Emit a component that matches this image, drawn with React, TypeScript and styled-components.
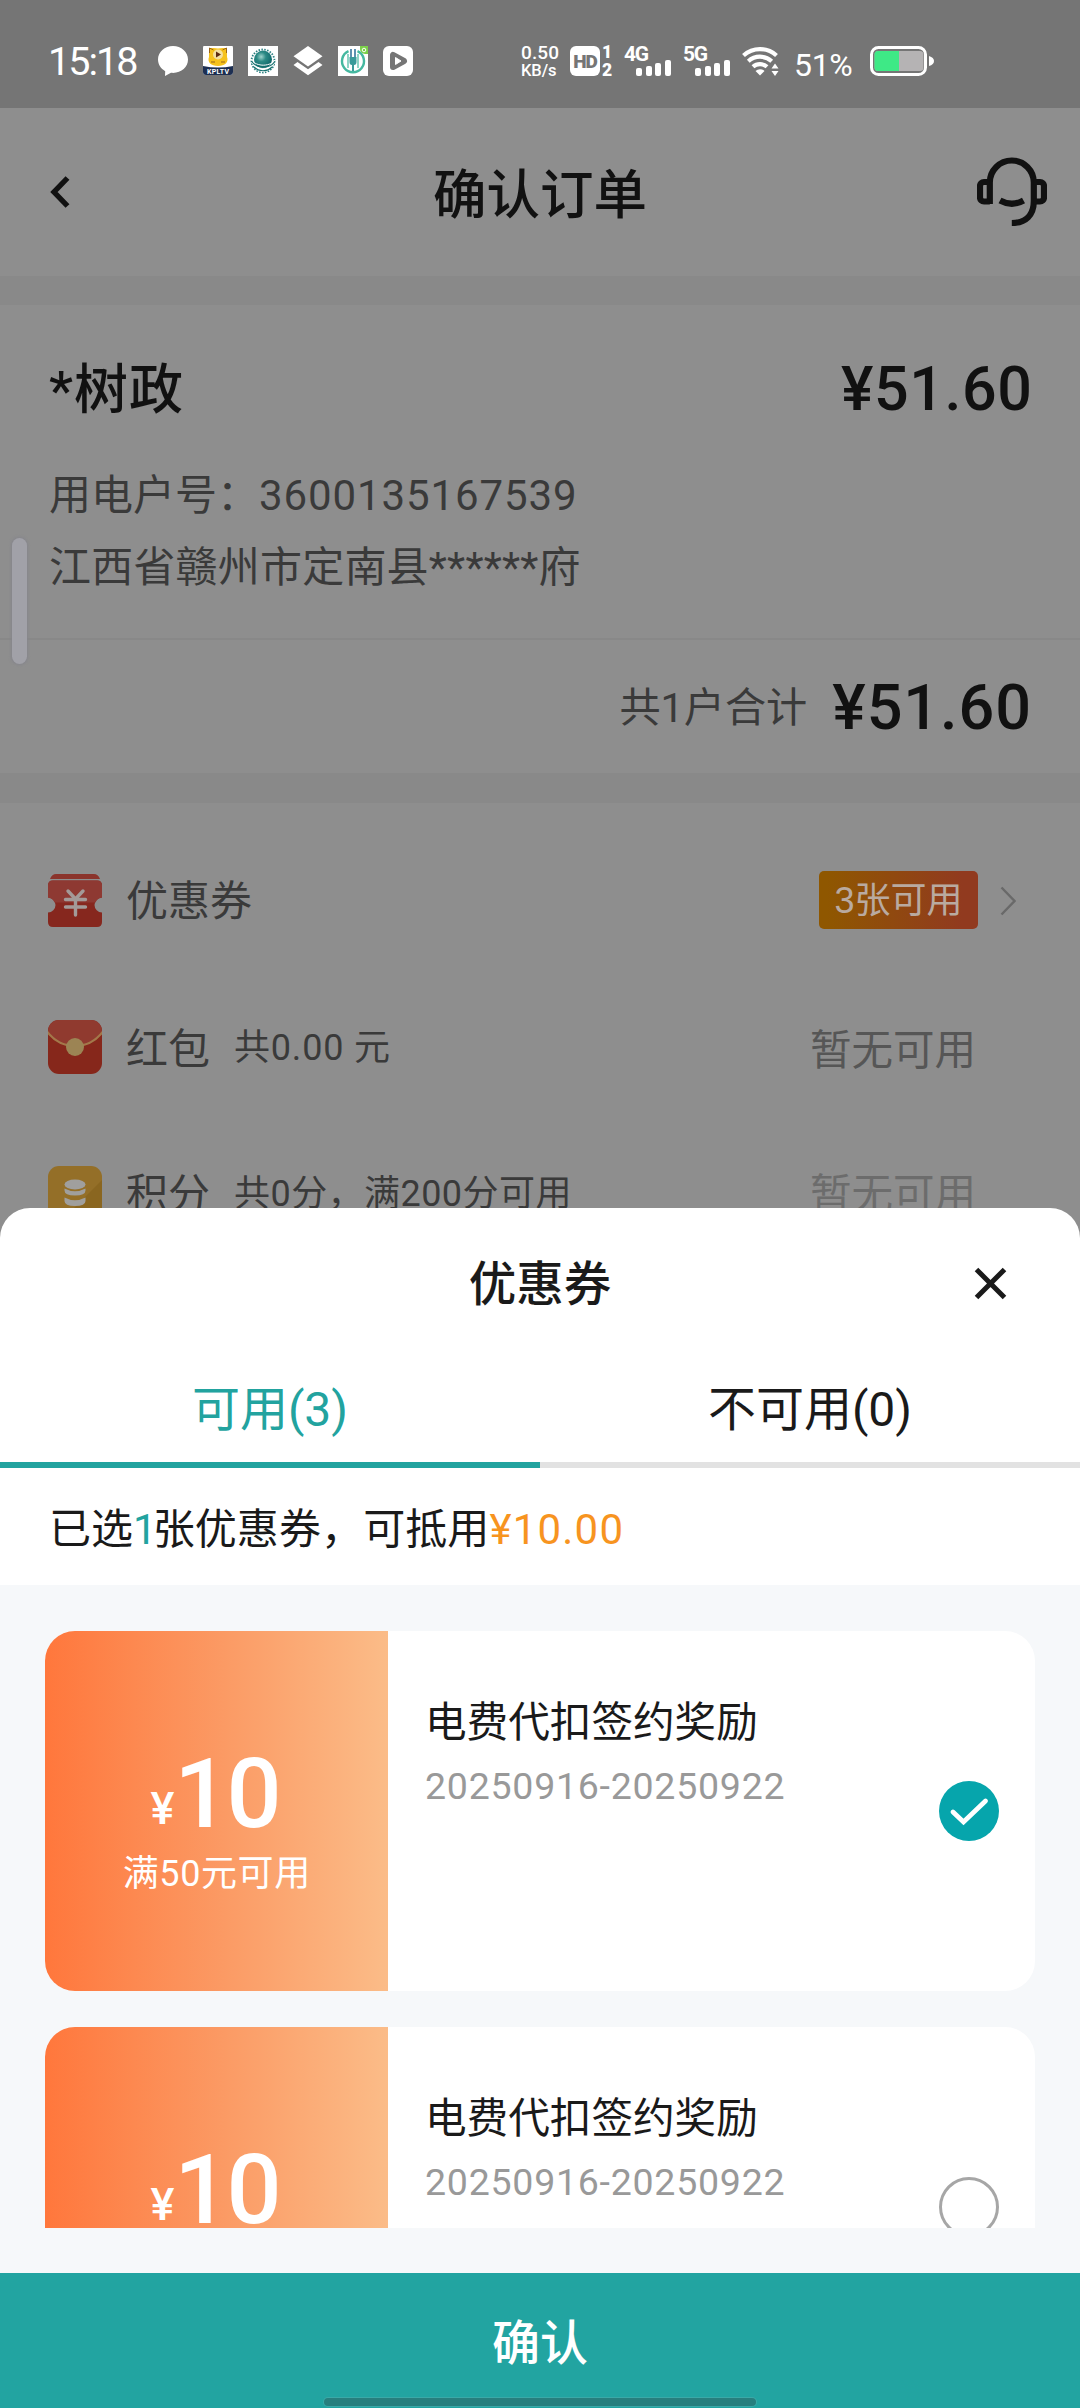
import React from "react";
import styled, { createGlobalStyle } from "styled-components";

const GlobalStyle = createGlobalStyle`
  * { box-sizing: border-box; }
  body { margin: 0; background: #8e8e8e; }
  svg { display: block; flex: none; }
`;

const Screen = styled.div`
  position: relative;
  width: 1080px;
  height: 2408px;
  overflow: hidden;
  background: #8e8e8e;
  font-family: Roboto, "Noto Sans CJK SC", sans-serif;
  color: #111;
`;

const Label = styled.span<{
  $size: number;
  $color?: string;
  $weight?: number;
  $spacing?: number;
  $dy?: number;
}>`
  display: block;
  white-space: nowrap;
  font-size: ${(p) => p.$size}px;
  line-height: ${(p) => Math.round(p.$size * 1.3)}px;
  color: ${(p) => p.$color ?? "inherit"};
  font-weight: ${(p) => p.$weight ?? 400};
  letter-spacing: ${(p) => p.$spacing ?? 0}px;
  margin-right: ${(p) => -(p.$spacing ?? 0)}px;
  padding-top: ${(p) => (p.$dy ?? 0) * 2}px;
`;

/* ---------- status bar ---------- */

const StatusBar = styled.header`
  display: flex;
  align-items: flex-start;
  height: 108px;
  padding: 46px 0 0 48px;
  background: #757575;
  color: #fff;
`;

const Clock = styled.div`
  width: 110px;
  font-size: 39.5px;
  line-height: 31px;
  letter-spacing: -2px;
`;

const AppIcons = styled.div`
  display: flex;
  gap: 15px;
  width: 363px;
`;

const Speed = styled.div`
  width: 49px;
  font-size: 19px;
  line-height: 18px;
  font-weight: 500;
  letter-spacing: 0.1px;
  margin-top: -2px;
  & > div:last-child {
    font-size: 16.5px;
    line-height: 17px;
    letter-spacing: -0.1px;
  }
`;

const HdBox = styled.div`
  width: 30px;
  height: 30px;
  border-radius: 6px;
  background: #fff;
  color: #757575;
  font-size: 19px;
  font-weight: 900;
  line-height: 31px;
  text-align: center;
  letter-spacing: -1px;
`;

const SimNumbers = styled.div`
  width: 24px;
  padding-left: 2px;
  font-size: 17.5px;
  line-height: 18px;
  font-weight: 900;
  margin-top: -3px;
`;

const Cell = styled.div`
  width: 59px;
  height: 30px;
  font-size: 21px;
  font-weight: 700;
  letter-spacing: -1.4px;
  line-height: 16px;
`;

const Bars = styled.div`
  display: flex;
  align-items: flex-end;
  gap: 3.6px;
  height: 16px;
  margin: -2px 0 0 12px;
`;

const Bar = styled.i<{ $h: number }>`
  width: 6px;
  height: ${(p) => p.$h}px;
  border-radius: 2px;
  background: #fff;
`;

const Percent = styled.div`
  width: 77px;
  padding-left: 1px;
  margin-left: 14px;
  font-size: 32px;
  line-height: 38px;
  letter-spacing: -0.3px;
`;

/* ---------- order page ---------- */

const TitleBar = styled.div`
  display: grid;
  grid-template-columns: 200px 1fr 200px;
  align-items: center;
  height: 168px;
  padding: 0 33px;
`;

const StartSlot = styled.div`
  padding-left: 17px;
`;

const Centered = styled.div`
  display: flex;
  justify-content: center;
`;

const EndSlot = styled.div`
  display: flex;
  justify-content: flex-end;
`;

const Band = styled.div<{ $h: number }>`
  height: ${(p) => p.$h}px;
  background: #898989;
`;

const Account = styled.section`
  height: 335px;
  padding: 50px 48px 0 49px;
  border-bottom: 2px solid #888;
`;

const SplitRow = styled.div<{ $h: number }>`
  display: flex;
  align-items: center;
  justify-content: space-between;
  height: ${(p) => p.$h}px;
`;

const TotalRow = styled.section`
  display: flex;
  align-items: center;
  justify-content: flex-end;
  gap: 25px;
  height: 133px;
  padding: 0 49px 0 0;
`;

const Benefits = styled.section`
  padding-top: 25px;
`;

const BenefitRow = styled.div`
  display: flex;
  align-items: center;
  height: 146px;
  padding: 0 64px 0 48px;
`;

const BenefitName = styled.div`
  margin-left: 24px;
`;

const BenefitNote = styled.div`
  flex: 1;
  margin-left: 24px;
`;

const Badge = styled.div`
  display: flex;
  align-items: center;
  justify-content: center;
  width: 159px;
  height: 58px;
  margin: -2px 22px 0 0;
  border-radius: 5px;
  background: linear-gradient(90deg, #8f5700 5%, #913a1f 90%);
  color: #b9aaa0;
  font-family: "Liberation Sans", "Noto Sans CJK SC", sans-serif;
`;

const Unavailable = styled.div`
  margin-right: 40px;
`;

const EdgeHandle = styled.div`
  position: absolute;
  left: 12px;
  top: 538px;
  width: 15px;
  height: 126px;
  border-radius: 8px;
  background: #a1a1a8;
  box-shadow: 0 0 3px 1px #85858c;
`;

/* ---------- coupon sheet ---------- */

const Sheet = styled.section`
  position: absolute;
  left: 0;
  right: 0;
  bottom: 0;
  display: flex;
  flex-direction: column;
  height: 1200px;
  border-radius: 30px 30px 0 0;
  background: #fff;
  overflow: hidden;
  color: #1a1a1a;
`;

const SheetHeader = styled.div`
  display: grid;
  grid-template-columns: 200px 1fr 200px;
  align-items: center;
  height: 150px;
  padding: 0 73px;
`;

const Tabs = styled.div`
  display: grid;
  grid-template-columns: 1fr 1fr;
  height: 110px;
`;

const Tab = styled.div<{ $active?: boolean }>`
  display: flex;
  align-items: center;
  justify-content: center;
  padding-bottom: 1px;
  border-bottom: 6px solid ${(p) => (p.$active ? "#22a39f" : "#e2e2e2")};
  color: ${(p) => (p.$active ? "#22a39f" : "#1a1a1a")};
`;

const Summary = styled.div`
  display: flex;
  align-items: center;
  height: 117px;
  padding: 5px 0 0 49px;
`;

const Tint = styled.span<{ $c?: string; $spacing?: number }>`
  color: ${(p) => p.$c ?? "inherit"};
  letter-spacing: ${(p) => p.$spacing ?? 0}px;
`;

const ListArea = styled.div`
  height: 688px;
  padding: 46px 45px 45px;
  background: #f6f8fa;
`;

const CouponList = styled.div`
  display: flex;
  flex-direction: column;
  gap: 36px;
  height: 597px;
  overflow: hidden;
`;

const Coupon = styled.article`
  display: flex;
  flex: none;
  height: 360px;
  border-radius: 30px;
  background: #fff;
  overflow: hidden;
`;

const Value = styled.div`
  display: flex;
  flex-direction: column;
  align-items: center;
  width: 343px;
  padding-top: 114px;
  background: linear-gradient(90deg, #ff773c 0%, #fb9a64 52%, #fbbc88 100%);
  color: #fff;
`;

const Amount = styled.div`
  display: flex;
  align-items: baseline;
  height: 100px;
  margin-bottom: 6px;
  padding-right: 4px;
  font-weight: 500;
  font-size: 97px;
  line-height: 98px;
  letter-spacing: -3px;
`;

const Currency = styled.span`
  padding-bottom: 3px;
  transform: translateY(-3px);
  font-size: 45px;
  line-height: 45px;
  letter-spacing: 0;
`;

const Info = styled.div`
  flex: 1;
  padding: 65px 0 0 37px;
`;

const Dates = styled.div`
  margin-top: 12px;
`;

const Choice = styled.div`
  padding: 150px 36px 0 0;
`;

const ConfirmButton = styled.div`
  display: flex;
  flex-direction: column;
  align-items: center;
  height: 135px;
  padding-top: 40px;
  background: #22a4a1;
  color: #fff;
`;

const HomeBar = styled.div`
  width: 432px;
  height: 8px;
  margin-top: 23px;
  border-radius: 4px;
  background: #277f7e;
  box-shadow: 0 0 0 1px #3aa9a7;
`;

/* ---------- drawings ---------- */

const ChatIcon = () => (
  <svg width="30" height="30" viewBox="0 0 30 30">
    <path d="M15 0C6.7 0 0 6 0 13.6c0 5 2.9 9.200 7.200 11.600L7 30l6-3.200c9.500 1 17-5 17-13.200C30 6 23.300 0 15 0z" fill="#fff" />
  </svg>
);

const TvIcon = () => (
  <svg width="30" height="30" viewBox="0 0 30 30">
    <rect y="-1" width="30" height="30" rx="3" fill="#fff" />
    <path d="M0 20q15 3 30 0v6q0 3-3 3H3q-3 0-3-3z" fill="#1d2f52" />
    <path d="M6 2l4 0 5 0.500 5-.5 4 0v9c2 5-2 9-9 9s-11-4-9-9z" fill="#f6c21c" />
    <path d="M6.500 7V2l4 2M23.500 7V2l-4 2M8 16h4M18 16h4" fill="none" stroke="#9a6418" strokeWidth="1" />
    <circle cx="15" cy="8.500" r="5" fill="#f3e0a0" />
    <path d="M13 5.500v6l5-3z" fill="#5b2a12" />
    <text x="15" y="28" textAnchor="middle" fontSize="7" fontWeight="700" fill="#fff" fontFamily="Roboto" textLength="22">KPLTV</text>
  </svg>
);

const GlobeIcon = () => (
  <svg width="30" height="30" viewBox="0 0 30 30">
    <defs>
      <radialGradient id="globe" cx="40%" cy="35%" r="65%">
        <stop offset="0" stopColor="#9fd3cc" />
        <stop offset="0.400" stopColor="#2c8a85" />
        <stop offset="1" stopColor="#0c6468" />
      </radialGradient>
    </defs>
    <rect width="30" height="30" fill="#fff" />
    <circle cx="15" cy="15" r="11.500" fill="none" stroke="#2a7f80" strokeWidth="1.800" strokeDasharray="1.500 1.400" />
    <circle cx="15" cy="13.500" r="9" fill="url(#globe)" />
    <path d="M3 13c3 7 18 9 24 1M4 17c5 7 16 7 22 1M8 23c4 3 10 3 14 0" fill="none" stroke="#fff" strokeWidth="1" />
    <path d="M3.500 15c4 7 17 9 23 1M6 21c5 5 13 5 18 0" fill="none" stroke="#14716f" strokeWidth="1.200" />
  </svg>
);

const LayersIcon = () => (
  <svg width="30" height="30" viewBox="0 0 30 30">
    <path d="M15 0l14.500 10.200L15 20.500.5 10.200z" fill="#fff" />
    <path d="M4.500 16L15 23.300 25.500 16l4 3L15 29.200.5 19z" fill="#fff" />
  </svg>
);

const PlugIcon = () => (
  <svg width="30" height="30" viewBox="0 0 30 30">
    <rect width="30" height="30" fill="#fff" />
    <path d="M22 0h8v8h-3a5 5 0 0 1-5-5z" fill="#7bd04a" />
    <circle cx="26" cy="4" r="1.800" fill="none" stroke="#fff" strokeWidth="1" />
    <path d="M10.500 5.200a11 11 0 1 0 9 0" fill="none" stroke="#45b8a0" strokeWidth="2.400" />
    <path d="M10 8v14M20 8v14" stroke="#45b8a0" strokeWidth="1.200" />
    <path d="M13 3v9M17 3v9" stroke="#4d86a8" strokeWidth="1.800" />
    <path d="M11.500 11h7v5q0 3-2.500 3v6h-2v-6q-2.500 0-2.500-3z" fill="#3a9a9a" />
  </svg>
);

const PlayIcon = () => (
  <svg width="30" height="30" viewBox="0 0 30 30">
    <rect width="30" height="30" rx="6" fill="#fff" />
    <path d="M10 9v12l11-6z" fill="#757575" stroke="#757575" strokeWidth="6" strokeLinejoin="round" />
    <path d="M12.500 11.500v7l5.500-3.500z" fill="#fff" stroke="#fff" strokeWidth="1" strokeLinejoin="round" />
  </svg>
);

const WifiIcon = () => (
  <svg width="37" height="30" viewBox="0 0 37 30">
    <g fill="none" stroke="#fff" strokeWidth="4.200">
      <path d="M1.500 9.500a24.500 24.500 0 0 1 33 0" />
      <path d="M6.300 15.200a17.500 17.500 0 0 1 23.400 0" />
      <path d="M11 20.800a10.500 10.500 0 0 1 14 0" />
    </g>
    <path d="M18 29.500l-4.500-4.500a6.500 6.500 0 0 1 9 0z" fill="#fff" />
    <path d="M33 17.500l3.500 5h-7zM33 30l3.500-5h-7z" fill="#fff" />
  </svg>
);

const BatteryIcon = () => (
  <svg width="65" height="30" viewBox="0 0 65 30">
    <rect x="1.500" y="1.500" width="54" height="27" rx="7" fill="none" stroke="#fff" strokeWidth="3" />
    <rect x="4.500" y="5" width="49" height="20" rx="3.500" fill="#b5b3b4" />
    <path d="M8 5h21v20H8a3.500 3.500 0 0 1-3.500-3.500v-13A3.500 3.500 0 0 1 8 5z" fill="#3ee986" />
    <path d="M59 10q5 1.500 5 5t-5 5z" fill="#fff" />
  </svg>
);

const BackIcon = () => (
  <svg width="20" height="34" viewBox="0 0 20 34">
    <path d="M17.500 3L4 17l13.500 14" fill="none" stroke="#111" strokeWidth="5.400" />
  </svg>
);

const HeadsetIcon = () => (
  <svg width="70" height="70" viewBox="0 0 70 70">
    <g fill="none" stroke="#111" strokeWidth="6.200">
      <path d="M12.800 47V25.500a22 22 0 0 1 44 0V44c0 14-8 22-22 22" />
      <path d="M12.800 44.500H7a4 4 0 0 1-4-4V29a4 4 0 0 1 4-4h5.800" />
      <path d="M56.800 25H63a4 4 0 0 1 4 4v11.500a4 4 0 0 1-4 4h-6.200" />
      <path d="M23 43.500q12 6.500 23.500 0" />
    </g>
  </svg>
);

const TicketIcon = () => (
  <svg width="54" height="54" viewBox="0 0 54 54">
    <path d="M8 0h38q4 0 6 5H2q2-5 6-5z" fill="#8b342c" />
    <path d="M5 6.500h44q5 0 5 5V23.500a7.500 7.500 0 0 0 0 15V48q0 5-5 5H5q-5 0-5-5v-9.500a7.500 7.500 0 0 0 0-15V11.500q0-5 5-5z" fill="#86271e" />
    <path d="M5 6.500h44q5 0 5 5V23.500q-5 1-6.500 5H6.500Q5 24.500 0 23.500V11.500q0-5 5-5z" fill="#8e3932" />
    <path d="M20 17l7.500 8L35 17M17.500 25.500h20M17.500 33h20M27.500 26v15" fill="none" stroke="#a39a98" strokeWidth="3.400" strokeLinecap="round" />
  </svg>
);

const EnvelopeIcon = () => (
  <svg width="54" height="54" viewBox="0 0 54 54">
    <defs>
      <clipPath id="env"><rect width="54" height="54" rx="11" /></clipPath>
    </defs>
    <g clipPath="url(#env)">
      <rect width="54" height="54" fill="#86271b" />
      <path d="M0 0h54v12C46 22 38 26.500 27 26.500S8 22 0 12z" fill="#903a2f" />
      <path d="M-1 11.500C7 22 16 26 27 26s20-4 28-14.500" fill="none" stroke="#a3784a" strokeWidth="2.200" />
    </g>
    <circle cx="27" cy="27" r="9" fill="#9c8454" />
  </svg>
);

const CoinsIcon = () => (
  <svg width="54" height="54" viewBox="0 0 54 54">
    <rect width="54" height="54" rx="11" fill="#946f28" />
    <path d="M54 14v29q0 11-11 11H14z" fill="#8a6620" />
    <g fill="#a09f9d">
      <ellipse cx="27" cy="18.500" rx="10.500" ry="5" />
      <path d="M16.500 22.500q10.500 5.500 21 0v2q0 5-10.500 5t-10.500-5z" />
      <path d="M16.500 31.500q10.500 5.500 21 0v3.500q0 5-10.500 5t-10.500-5z" />
    </g>
  </svg>
);

const ChevronIcon = () => (
  <svg width="16" height="30" viewBox="0 0 16 30">
    <path d="M1.500 1.500L14.500 15 1.500 28.500" fill="none" stroke="#696969" strokeWidth="2.400" />
  </svg>
);

const CloseIcon = () => (
  <svg width="33" height="33" viewBox="0 0 33 33">
    <path d="M2.500 2.500l28 28M30.500 2.500l-28 28" stroke="#1a1a1a" strokeWidth="5" />
  </svg>
);

const CheckedIcon = () => (
  <svg width="60" height="60" viewBox="0 0 60 60">
    <circle cx="30" cy="30" r="30" fill="#06a5ac" />
    <path d="M14 31l10.500 10L46.500 20" fill="none" stroke="#fff" strokeWidth="4.800" strokeLinecap="round" />
  </svg>
);

const UncheckedIcon = () => (
  <svg width="60" height="60" viewBox="0 0 60 60">
    <circle cx="30" cy="30" r="28.500" fill="#fff" stroke="#a6a6a6" strokeWidth="3" />
  </svg>
);

/* ---------- composed parts ---------- */

const CellSignal = ({ name }: { name: string }) => (
  <Cell>
    {name}
    <Bars>
      {[8, 10, 13, 16].map((h) => (
        <Bar key={h} $h={h} />
      ))}
    </Bars>
  </Cell>
);

const CouponCard = ({ selected }: { selected?: boolean }) => (
  <Coupon>
    <Value>
      <Amount>
        <Currency>¥</Currency>10
      </Amount>
      <Label $size={36} $spacing={0.600}>满50元可用</Label>
    </Value>
    <Info>
      <Label $size={41.600}>电费代扣签约奖励</Label>
      <Dates>
        <Label $size={37.500} $color="#999" $spacing={0.750}>20250916-20250922</Label>
      </Dates>
    </Info>
    <Choice>{selected ? <CheckedIcon /> : <UncheckedIcon />}</Choice>
  </Coupon>
);

export default function App() {
  return (
    <Screen>
      <GlobalStyle />
      <StatusBar>
        <Clock>15:18</Clock>
        <AppIcons>
          <ChatIcon />
          <TvIcon />
          <GlobeIcon />
          <LayersIcon />
          <PlugIcon />
          <PlayIcon />
        </AppIcons>
        <Speed>
          <div>0.50</div>
          <div>KB/s</div>
        </Speed>
        <HdBox>HD</HdBox>
        <SimNumbers>
          <div>1</div>
          <div>2</div>
        </SimNumbers>
        <CellSignal name="4G" />
        <CellSignal name="5G" />
        <WifiIcon />
        <Percent>51%</Percent>
        <BatteryIcon />
      </StatusBar>

      <TitleBar>
        <StartSlot>
          <BackIcon />
        </StartSlot>
        <Centered>
          <Label $size={53.500} $weight={500} $dy={4}>确认订单</Label>
        </Centered>
        <EndSlot>
          <HeadsetIcon />
        </EndSlot>
      </TitleBar>
      <Band $h={29} />

      <Account>
        <SplitRow $h={68}>
          <Label $size={54} $weight={500} $spacing={1} $dy={2}>*树政</Label>
          <Label $size={61} $weight={500} $spacing={0.600}>¥51.60</Label>
        </SplitRow>
        <SplitRow $h={140}>
          <Label $size={42} $color="#3a3a3a" $dy={2}>
            用电户号：
            <Tint $spacing={0.900}>3600135167539</Tint>
          </Label>
        </SplitRow>
        <SplitRow $h={6}>
          <Label $size={42} $color="#3a3a3a" $spacing={0.200} $dy={1}>江西省赣州市定南县******府</Label>
        </SplitRow>
      </Account>
      <TotalRow>
        <Label $size={41.200} $color="#3a3a3a" $dy={1}>共1户合计</Label>
        <Label $size={63} $weight={500} $spacing={0.900} $dy={1}>¥51.60</Label>
      </TotalRow>
      <Band $h={30} />

      <Benefits>
        <BenefitRow>
          <TicketIcon />
          <BenefitName>
            <Label $size={42} $color="#3a3a3a">优惠券</Label>
          </BenefitName>
          <BenefitNote />
          <Badge>
            <Label $size={36}>3张可用</Label>
          </Badge>
          <ChevronIcon />
        </BenefitRow>
        <BenefitRow>
          <EnvelopeIcon />
          <BenefitName>
            <Label $size={42} $color="#3a3a3a" $dy={2}>红包</Label>
          </BenefitName>
          <BenefitNote>
            <Label $size={36} $color="#3a3a3a" $spacing={0.800} $dy={1}>共0.00 元</Label>
          </BenefitNote>
          <Unavailable>
            <Label $size={41.500} $color="#565656" $dy={4}>暂无可用</Label>
          </Unavailable>
        </BenefitRow>
        <BenefitRow>
          <CoinsIcon />
          <BenefitName>
            <Label $size={42} $color="#3a3a3a" $dy={1}>积分</Label>
          </BenefitName>
          <BenefitNote>
            <Label $size={36} $color="#3a3a3a" $spacing={0.450} $dy={1}>共0分，满200分可用</Label>
          </BenefitNote>
          <Unavailable>
            <Label $size={41.500} $color="#6c6c6c" $dy={2}>暂无可用</Label>
          </Unavailable>
        </BenefitRow>
      </Benefits>

      <EdgeHandle />

      <Sheet>
        <SheetHeader>
          <span />
          <Centered>
            <Label $size={47.500} $weight={500} $dy={2}>优惠券</Label>
          </Centered>
          <EndSlot>
            <CloseIcon />
          </EndSlot>
        </SheetHeader>
        <Tabs>
          <Tab $active>
            <Label $size={48}>可用(3)</Label>
          </Tab>
          <Tab>
            <Label $size={48}>不可用(0)</Label>
          </Tab>
        </Tabs>
        <Summary>
          <Label $size={42}>
            已选<Tint $c="#22a39f" $spacing={-4}>1</Tint>
            <Tint $spacing={0.100}>张优惠券，可抵用</Tint>
            <Tint $c="#f7941f" $spacing={1.200}>¥10.00</Tint>
          </Label>
        </Summary>
        <ListArea>
          <CouponList>
            <CouponCard selected />
            <CouponCard />
          </CouponList>
        </ListArea>
        <ConfirmButton>
          <Label $size={48} $weight={500}>确认</Label>
          <HomeBar />
        </ConfirmButton>
      </Sheet>
    </Screen>
  );
}
